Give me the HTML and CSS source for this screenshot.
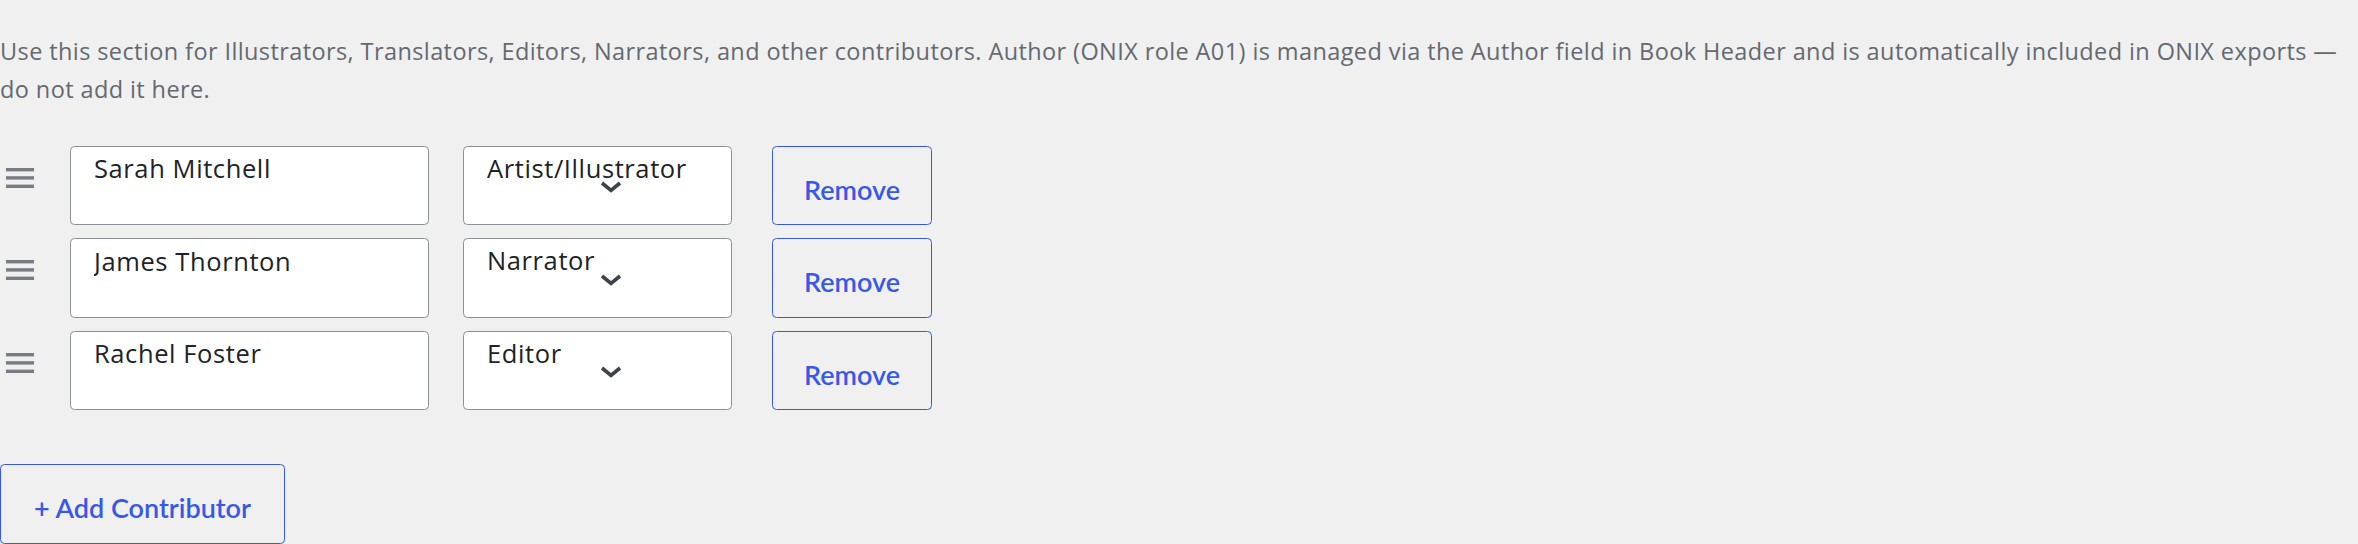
FILE: index.html
```html
<!DOCTYPE html>
<html>
<head>
    <title>Contributors</title>
    <link rel="stylesheet" href="styles.css">
</head>
<body>

    <div class="contributors">
        <p class="description">Use this section for Illustrators, Translators, Editors, Narrators, and other contributors. Author (ONIX role A01) is managed via the Author field in Book Header and is automatically included in ONIX exports — do not add it here.</p>

        <ul class="contributor-list">
            <li class="contributor-row">
                <span class="drag-handle">
                    <svg width="28" height="20" viewBox="0 0 28 20"><rect y="0" width="28" height="3.4"/><rect y="8.2" width="28" height="3.4"/><rect y="16.6" width="28" height="3.4"/></svg>
                </span>
                <input type="text" class="contributor-name" value="Sarah Mitchell">
                <span class="role-select">
                    <select>
                        <option selected>Artist/Illustrator</option>
                        <option>Translator</option>
                        <option>Editor</option>
                        <option>Narrator</option>
                    </select>
                    <svg class="chevron" width="22" height="12" viewBox="0 0 22 12"><path d="M2 2l9 7.5 9-7.5"/></svg>
                </span>
                <button class="button remove-contributor">Remove</button>
            </li>
            <li class="contributor-row">
                <span class="drag-handle">
                    <svg width="28" height="20" viewBox="0 0 28 20"><rect y="0" width="28" height="3.4"/><rect y="8.2" width="28" height="3.4"/><rect y="16.6" width="28" height="3.4"/></svg>
                </span>
                <input type="text" class="contributor-name" value="James Thornton">
                <span class="role-select">
                    <select>
                        <option>Artist/Illustrator</option>
                        <option>Translator</option>
                        <option>Editor</option>
                        <option selected>Narrator</option>
                    </select>
                    <svg class="chevron" width="22" height="12" viewBox="0 0 22 12"><path d="M2 2l9 7.5 9-7.5"/></svg>
                </span>
                <button class="button remove-contributor">Remove</button>
            </li>
            <li class="contributor-row">
                <span class="drag-handle">
                    <svg width="28" height="20" viewBox="0 0 28 20"><rect y="0" width="28" height="3.4"/><rect y="8.2" width="28" height="3.4"/><rect y="16.6" width="28" height="3.4"/></svg>
                </span>
                <input type="text" class="contributor-name" value="Rachel Foster">
                <span class="role-select">
                    <select>
                        <option>Artist/Illustrator</option>
                        <option>Translator</option>
                        <option selected>Editor</option>
                        <option>Narrator</option>
                    </select>
                    <svg class="chevron" width="22" height="12" viewBox="0 0 22 12"><path d="M2 2l9 7.5 9-7.5"/></svg>
                </span>
                <button class="button remove-contributor">Remove</button>
            </li>
        </ul>

        <button class="button add-contributor">+ Add Contributor</button>
    </div>

</body>
</html>
```

FILE: styles.css
```css
body {
    margin: 0;
    background-color: #f0f0f1;
    font-family: "Open Sans", Lato, sans-serif;
    color: #1d2327;
}
.contributors {
    padding-top: 32px;
}
.description {
    margin: 0 0 37px;
    font-size: 23.5px;
    line-height: 38.25px;
    letter-spacing: 0.4px;
    color: #646970;
}
.contributor-list {
    list-style: none;
    margin: 0;
    padding: 0;
}
.contributor-row {
    display: flex;
    align-items: flex-start;
    height: 79.5px;
    margin-bottom: 13px;
}
.drag-handle {
    display: block;
    margin: 22px 36px 0 6px;
    line-height: 0;
    cursor: move;
}
.drag-handle svg {
    fill: #787c82;
}
.contributor-name,
.role-select select {
    box-sizing: border-box;
    height: 79.5px;
    margin: 0;
    padding: 6px 23px 40px;
    border: 1.5px solid #8c8f94;
    border-radius: 4.5px;
    background-color: #fff;
    font-family: "Open Sans", Lato, sans-serif;
    font-size: 25.5px;
    line-height: 31px;
    letter-spacing: 0.6px;
    color: #1d2327;
}
.contributor-name {
    width: 359px;
}
.role-select {
    position: relative;
    display: block;
    margin-left: 34px;
}
.role-select select {
    width: 269px;
    -webkit-appearance: none;
    appearance: none;
}
.role-select .chevron {
    position: absolute;
    left: 137px;
    top: 35.5px;
    pointer-events: none;
}
.chevron path {
    fill: none;
    stroke: #3c434a;
    stroke-width: 3.6;
}
.button {
    box-sizing: border-box;
    height: 79.5px;
    margin: 0;
    padding: 8px 33px 0;
    border: 1.5px solid #3858e9;
    border-radius: 4.5px;
    background-color: #f0f0f1;
    font-family: Lato, "Open Sans", sans-serif;
    font-size: 27px;
    font-weight: 600;
    color: #3858e9;
    cursor: pointer;
}
.remove-contributor {
    width: 160px;
    margin-left: 40px;
    padding: 8px 0 0;
}
.add-contributor {
    margin-top: 41px;
}
```
